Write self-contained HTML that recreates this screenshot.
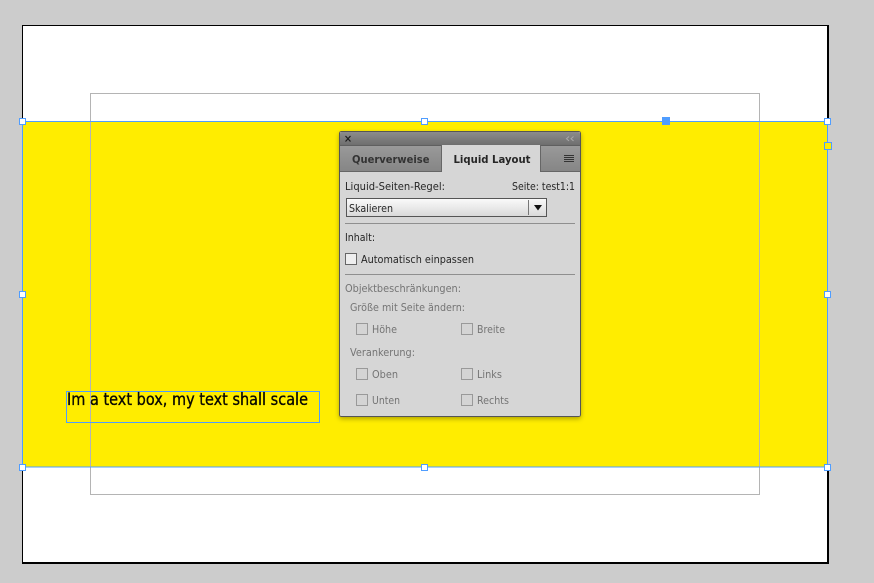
<!DOCTYPE html>
<html>
<head>
<meta charset="utf-8">
<style>
html,body{margin:0;padding:0;width:874px;height:583px;overflow:hidden;background:#ccc}
svg{display:block}
.p{font-family:"DejaVu Sans","Liberation Sans",sans-serif;font-size:11px;fill:#262626}
.d{fill:#747474}
.b{font-weight:bold;font-size:11px}
</style>
</head>
<body>
<svg width="874" height="583" viewBox="0 0 874 583" xmlns="http://www.w3.org/2000/svg" shape-rendering="crispEdges">
<defs>
<linearGradient id="tb" x1="0" y1="0" x2="0" y2="1"><stop offset="0" stop-color="#8c8c8c"/><stop offset="1" stop-color="#6e6e6e"/></linearGradient>
<linearGradient id="tg" x1="0" y1="0" x2="0" y2="1"><stop offset="0" stop-color="#9a9a9a"/><stop offset="1" stop-color="#858585"/></linearGradient>
<linearGradient id="dd" x1="0" y1="0" x2="0" y2="1"><stop offset="0" stop-color="#fbfbfb"/><stop offset="1" stop-color="#d8d8d8"/></linearGradient>
<filter id="sh" x="-10%" y="-10%" width="120%" height="120%"><feDropShadow dx="0" dy="2" stdDeviation="2.500" flood-color="#000" flood-opacity=".3"/></filter>
</defs>
<rect width="874" height="583" fill="#cccccc"/>
<!-- page -->
<rect x="22" y="25" width="807" height="539" fill="#000"/>
<rect x="23" y="26" width="804" height="536" fill="#fff"/>
<!-- yellow -->
<rect x="23" y="121" width="805" height="346" fill="#ffed00"/>
<rect x="828" y="122" width="1" height="345" fill="#ccc"/>
<!-- margin guide -->
<rect x="90.500" y="93.500" width="669" height="401" fill="none" stroke="#b4b4b4"/>
<!-- selection -->
<rect x="22.500" y="121.500" width="805" height="345.500" fill="none" stroke="#4f9dff"/>
<!-- text frame -->
<rect x="66.500" y="391.500" width="253" height="31" fill="none" stroke="#4f9dff"/>
<text x="67" y="405" font-family="'DejaVu Sans',sans-serif" font-size="17" fill="#0a0a00" stroke="#0a0a00" stroke-width=".35" textLength="241" lengthAdjust="spacingAndGlyphs" shape-rendering="auto">Im a text box, my text shall scale</text>
<!-- handles -->
<g fill="#fff" stroke="#4f9dff">
<rect x="19.500" y="118.500" width="6" height="6"/>
<rect x="421.500" y="118.500" width="6" height="6"/>
<rect x="824.500" y="118.500" width="6" height="6"/>
<rect x="19.500" y="291.500" width="6" height="6"/>
<rect x="824.500" y="291.500" width="6" height="6"/>
<rect x="19.500" y="464.500" width="6" height="6"/>
<rect x="421.500" y="464.500" width="6" height="6"/>
<rect x="824.500" y="464.500" width="6" height="6"/>
<rect x="824.500" y="142.500" width="7" height="7" fill="#ffed00"/>
</g>
<rect x="662" y="117" width="8" height="8" fill="#4f9dff"/>
<!-- panel -->
<g filter="url(#sh)"><rect x="339.500" y="131.500" width="241" height="285" rx="2" fill="#d6d6d6" stroke="#555"/></g>
<path d="M340 145V134q0-2 2-2H578q2 0 2 2V145Z" fill="url(#tb)" shape-rendering="auto"/>
<rect x="340" y="145" width="240" height="27" fill="url(#tg)"/>
<rect x="340" y="145" width="240" height="1" fill="#5f5f5f"/>
<rect x="340" y="171" width="102" height="1" fill="#666"/>
<rect x="540" y="171" width="40" height="1" fill="#666"/>
<rect x="441" y="145" width="1" height="27" fill="#666"/>
<rect x="540" y="145" width="1" height="27" fill="#666"/>
<rect x="442" y="145" width="98" height="27" fill="#d6d6d6"/>
<g shape-rendering="auto">
<path d="M345.500 136l5 5.500M350.500 136l-5 5.500" stroke="#1c1c1c" stroke-width="1.200" fill="none"/>
<path d="M569 136.500l-2.500 2.200 2.500 2.200M573.500 136.500l-2.500 2.200 2.500 2.200" stroke="#a8a8a8" stroke-width="1" fill="none"/>
<text class="p b" x="352" y="163" style="fill:#333" textLength="77.500" lengthAdjust="spacingAndGlyphs">Querverweise</text>
<text class="p b" x="453.500" y="163" textLength="77" lengthAdjust="spacingAndGlyphs">Liquid Layout</text>
</g>
<path d="M564 155.500h10M564 157.500h10M564 159.500h10M564 161.500h10" stroke="#333" fill="none"/>
<!-- dropdown -->
<rect x="346.500" y="198.500" width="200" height="18" fill="url(#dd)" stroke="#555"/>
<rect x="528" y="200" width="1" height="15" fill="#777"/>
<path d="M534 205h8l-4 5.500Z" fill="#111" shape-rendering="auto"/>
<!-- separators -->
<rect x="345" y="223" width="230" height="1" fill="#8f8f8f"/>
<rect x="345" y="274" width="230" height="1" fill="#8f8f8f"/>
<!-- checkboxes -->
<rect x="345.500" y="253.500" width="11" height="11" fill="#eeeeee" stroke="#666"/>
<g fill="#d4d4d4" stroke="#999">
<rect x="356.500" y="323.500" width="11" height="11"/>
<rect x="461.500" y="323.500" width="11" height="11"/>
<rect x="356.500" y="368.500" width="11" height="11"/>
<rect x="461.500" y="368.500" width="11" height="11"/>
<rect x="356.500" y="394.500" width="11" height="11"/>
<rect x="461.500" y="394.500" width="11" height="11"/>
</g>
<!-- labels -->
<g shape-rendering="auto">
<text class="p" x="345" y="190" textLength="100" lengthAdjust="spacingAndGlyphs">Liquid-Seiten-Regel:</text>
<text class="p" x="512" y="190" textLength="63" lengthAdjust="spacingAndGlyphs">Seite: test1:1</text>
<text class="p" x="349" y="212" textLength="44" lengthAdjust="spacingAndGlyphs">Skalieren</text>
<text class="p" x="345" y="241" textLength="30" lengthAdjust="spacingAndGlyphs">Inhalt:</text>
<text class="p" x="361" y="263" textLength="113" lengthAdjust="spacingAndGlyphs">Automatisch einpassen</text>
<text class="p d" x="345" y="292" textLength="116" lengthAdjust="spacingAndGlyphs">Objektbeschränkungen:</text>
<text class="p d" x="350" y="311" textLength="115" lengthAdjust="spacingAndGlyphs">Größe mit Seite ändern:</text>
<text class="p d" x="372" y="333" textLength="25" lengthAdjust="spacingAndGlyphs">Höhe</text>
<text class="p d" x="477" y="333" textLength="28" lengthAdjust="spacingAndGlyphs">Breite</text>
<text class="p d" x="350" y="356" textLength="65" lengthAdjust="spacingAndGlyphs">Verankerung:</text>
<text class="p d" x="372" y="378" textLength="26" lengthAdjust="spacingAndGlyphs">Oben</text>
<text class="p d" x="477" y="378" textLength="25" lengthAdjust="spacingAndGlyphs">Links</text>
<text class="p d" x="372" y="404" textLength="28" lengthAdjust="spacingAndGlyphs">Unten</text>
<text class="p d" x="477" y="404" textLength="32" lengthAdjust="spacingAndGlyphs">Rechts</text>
</g>
</svg>
</body>
</html>
